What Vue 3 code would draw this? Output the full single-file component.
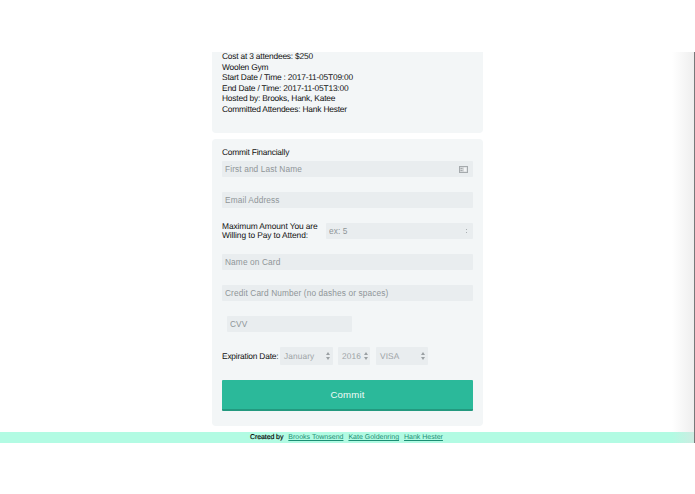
<script setup>
const details = [
  'Cost at 3 attendees: $250',
  'Woolen Gym',
  'Start Date / Time : 2017-11-05T09:00',
  'End Date / Time: 2017-11-05T13:00',
  'Hosted by: Brooks, Hank, Katee',
  'Committed Attendees: Hank Hester'
]
const creators = ['Brooks Townsend', 'Kate Goldenring', 'Hank Hester']
</script>

<template>
  <div class="page">
    <div class="content">
      <section class="panel info">
        <div class="lines">
          <div v-for="line in details" :key="line">{{ line }}</div>
        </div>
      </section>

      <form class="panel form" @submit.prevent>
        <label class="title">Commit Financially</label>
        <div class="field first">
          <input class="input" placeholder="First and Last Name" />
          <svg class="card-icon" width="9" height="7" viewBox="0 0 9 7">
            <rect x="0.5" y="0.5" width="8" height="6" fill="#d5d8da" stroke="#a5aaad" />
            <rect x="5" y="1.5" width="2.5" height="4" fill="#f2f4f5" />
            <path d="M1.5 2.5h2M1.5 4.5h2" stroke="#a5aaad" />
          </svg>
        </div>
        <input class="input row" placeholder="Email Address" />
        <div class="amount row">
          <label>Maximum Amount You are<br />Willing to Pay to Attend:</label>
          <div class="field grow">
            <input class="input" placeholder="ex: 5" />
            <span class="spin"><i></i><i></i></span>
          </div>
        </div>
        <input class="input row" placeholder="Name on Card" />
        <input class="input row" placeholder="Credit Card Number (no dashes or spaces)" />
        <input class="input row cvv" placeholder="CVV" />
        <div class="expiry">
          <label>Expiration Date:</label>
          <div class="select month">January<span class="arrows"><i class="up"></i><i class="down"></i></span></div>
          <div class="select year">2016<span class="arrows"><i class="up"></i><i class="down"></i></span></div>
          <div class="select type">VISA<span class="arrows"><i class="up"></i><i class="down"></i></span></div>
        </div>
        <button class="commit" type="submit">Commit</button>
      </form>

      <footer class="footer">
        <span class="by">Created by</span>
        <a v-for="name in creators" :key="name" href="#">{{ name }}</a>
      </footer>
      <div class="edge"></div>
    </div>
  </div>
</template>

<style>
html, body {
  margin: 0;
  background: #fff;
}
</style>

<style scoped>
.page {
  width: 695px;
  height: 494px;
  padding-top: 52px;
  box-sizing: border-box;
  background: #fff;
  font-family: "Liberation Sans", Arial, sans-serif;
  text-rendering: geometricPrecision;
  color: #111;
  overflow: hidden;
}

.content {
  position: relative;
  height: 391px;
  display: flex;
  flex-direction: column;
  align-items: center;
}

.panel {
  width: 271px;
  box-sizing: border-box;
  background: #f3f6f7;
  padding: 0 10px;
}

.info {
  height: 81px;
  border-radius: 0 0 4px 4px;
  font-size: 8.4px;
  letter-spacing: -0.2px;
  line-height: 10.5px;
}

.lines {
  margin-top: -1px;
}

.form {
  height: 287px;
  margin-top: 6px;
  padding-top: 8px;
  border-radius: 4px;
  display: flex;
  flex-direction: column;
}

.title {
  font-size: 8.4px;
  letter-spacing: -0.2px;
  line-height: 11px;
  margin-bottom: 3px;
}

.field {
  position: relative;
  display: flex;
}

.grow {
  flex: 1;
}

.input {
  width: 100%;
  height: 16px;
  box-sizing: border-box;
  border: 0;
  padding: 0 3px;
  background: #e9edef;
  border-radius: 1px;
  font-family: inherit;
  font-size: 8.3px;
  letter-spacing: 0.12px;
  outline: none;
}

.input::placeholder {
  color: #8f9598;
  opacity: 1;
}

.row {
  margin-top: 15px;
  flex-shrink: 0;
}

.card-icon {
  position: absolute;
  right: 5px;
  top: 5px;
}

.spin {
  position: absolute;
  right: 6px;
  top: 6px;
  display: flex;
  flex-direction: column;
  gap: 2px;
}

.spin i {
  display: block;
  width: 1px;
  height: 1px;
  background: #a9afb2;
}

.amount {
  height: 16px;
  display: flex;
  align-items: center;
  gap: 9px;
  font-size: 8.4px;
  letter-spacing: -0.1px;
  line-height: 9px;
}

.amount label {
  width: 95px;
  flex-shrink: 0;
  white-space: nowrap;
}

.cvv {
  width: 125px;
  margin-left: 5px;
}

.expiry {
  display: flex;
  align-items: center;
  margin-top: 15px;
  font-size: 8.4px;
  letter-spacing: -0.2px;
  gap: 5px;
}

.expiry label {
  width: 56px;
  margin-right: -3px;
  flex-shrink: 0;
  white-space: nowrap;
}

.select {
  position: relative;
  height: 18px;
  line-height: 18px;
  box-sizing: border-box;
  padding-left: 4px;
  background: #e9edef;
  border-radius: 1px;
  font-size: 8.3px;
  letter-spacing: 0.12px;
  color: #9da3a6;
}

.month { width: 53px; }
.year { width: 32px; margin-right: 1px; }
.type { width: 52px; }

.arrows {
  position: absolute;
  right: 3px;
  top: 5px;
  display: flex;
  flex-direction: column;
  gap: 2px;
}

.year .arrows {
  right: 2px;
}

.arrows i {
  display: block;
  border-left: 2px solid transparent;
  border-right: 2px solid transparent;
}

.arrows .up {
  border-bottom: 3px solid #9aa0a3;
}

.arrows .down {
  border-top: 3px solid #9aa0a3;
}

.commit {
  height: 31px;
  margin-top: 15px;
  flex-shrink: 0;
  border: 0;
  border-bottom: 2px solid #23997f;
  background: #2bb99a;
  color: #f2fbf8;
  border-radius: 1px;
  font-family: inherit;
  font-size: 9.6px;
  letter-spacing: 0.2px;
}

.footer {
  width: 100%;
  height: 11px;
  margin-top: 6px;
  padding-right: 2px;
  box-sizing: border-box;
  background: #b2fbe3;
  display: flex;
  justify-content: center;
  gap: 5px;
  font-size: 7px;
  line-height: 11px;
  flex-shrink: 0;
}

.by {
  color: #000;
  letter-spacing: -0.1px;
  -webkit-text-stroke: 0.15px #000;
}

.footer a {
  color: #1b8f74;
}

.edge {
  position: absolute;
  top: 0;
  right: 0;
  width: 23px;
  height: 100%;
  box-sizing: border-box;
  border-right: 1px solid #77797a;
  background: linear-gradient(to right, rgba(225, 225, 225, 0), rgba(225, 225, 225, 0.55));
  pointer-events: none;
}
</style>
